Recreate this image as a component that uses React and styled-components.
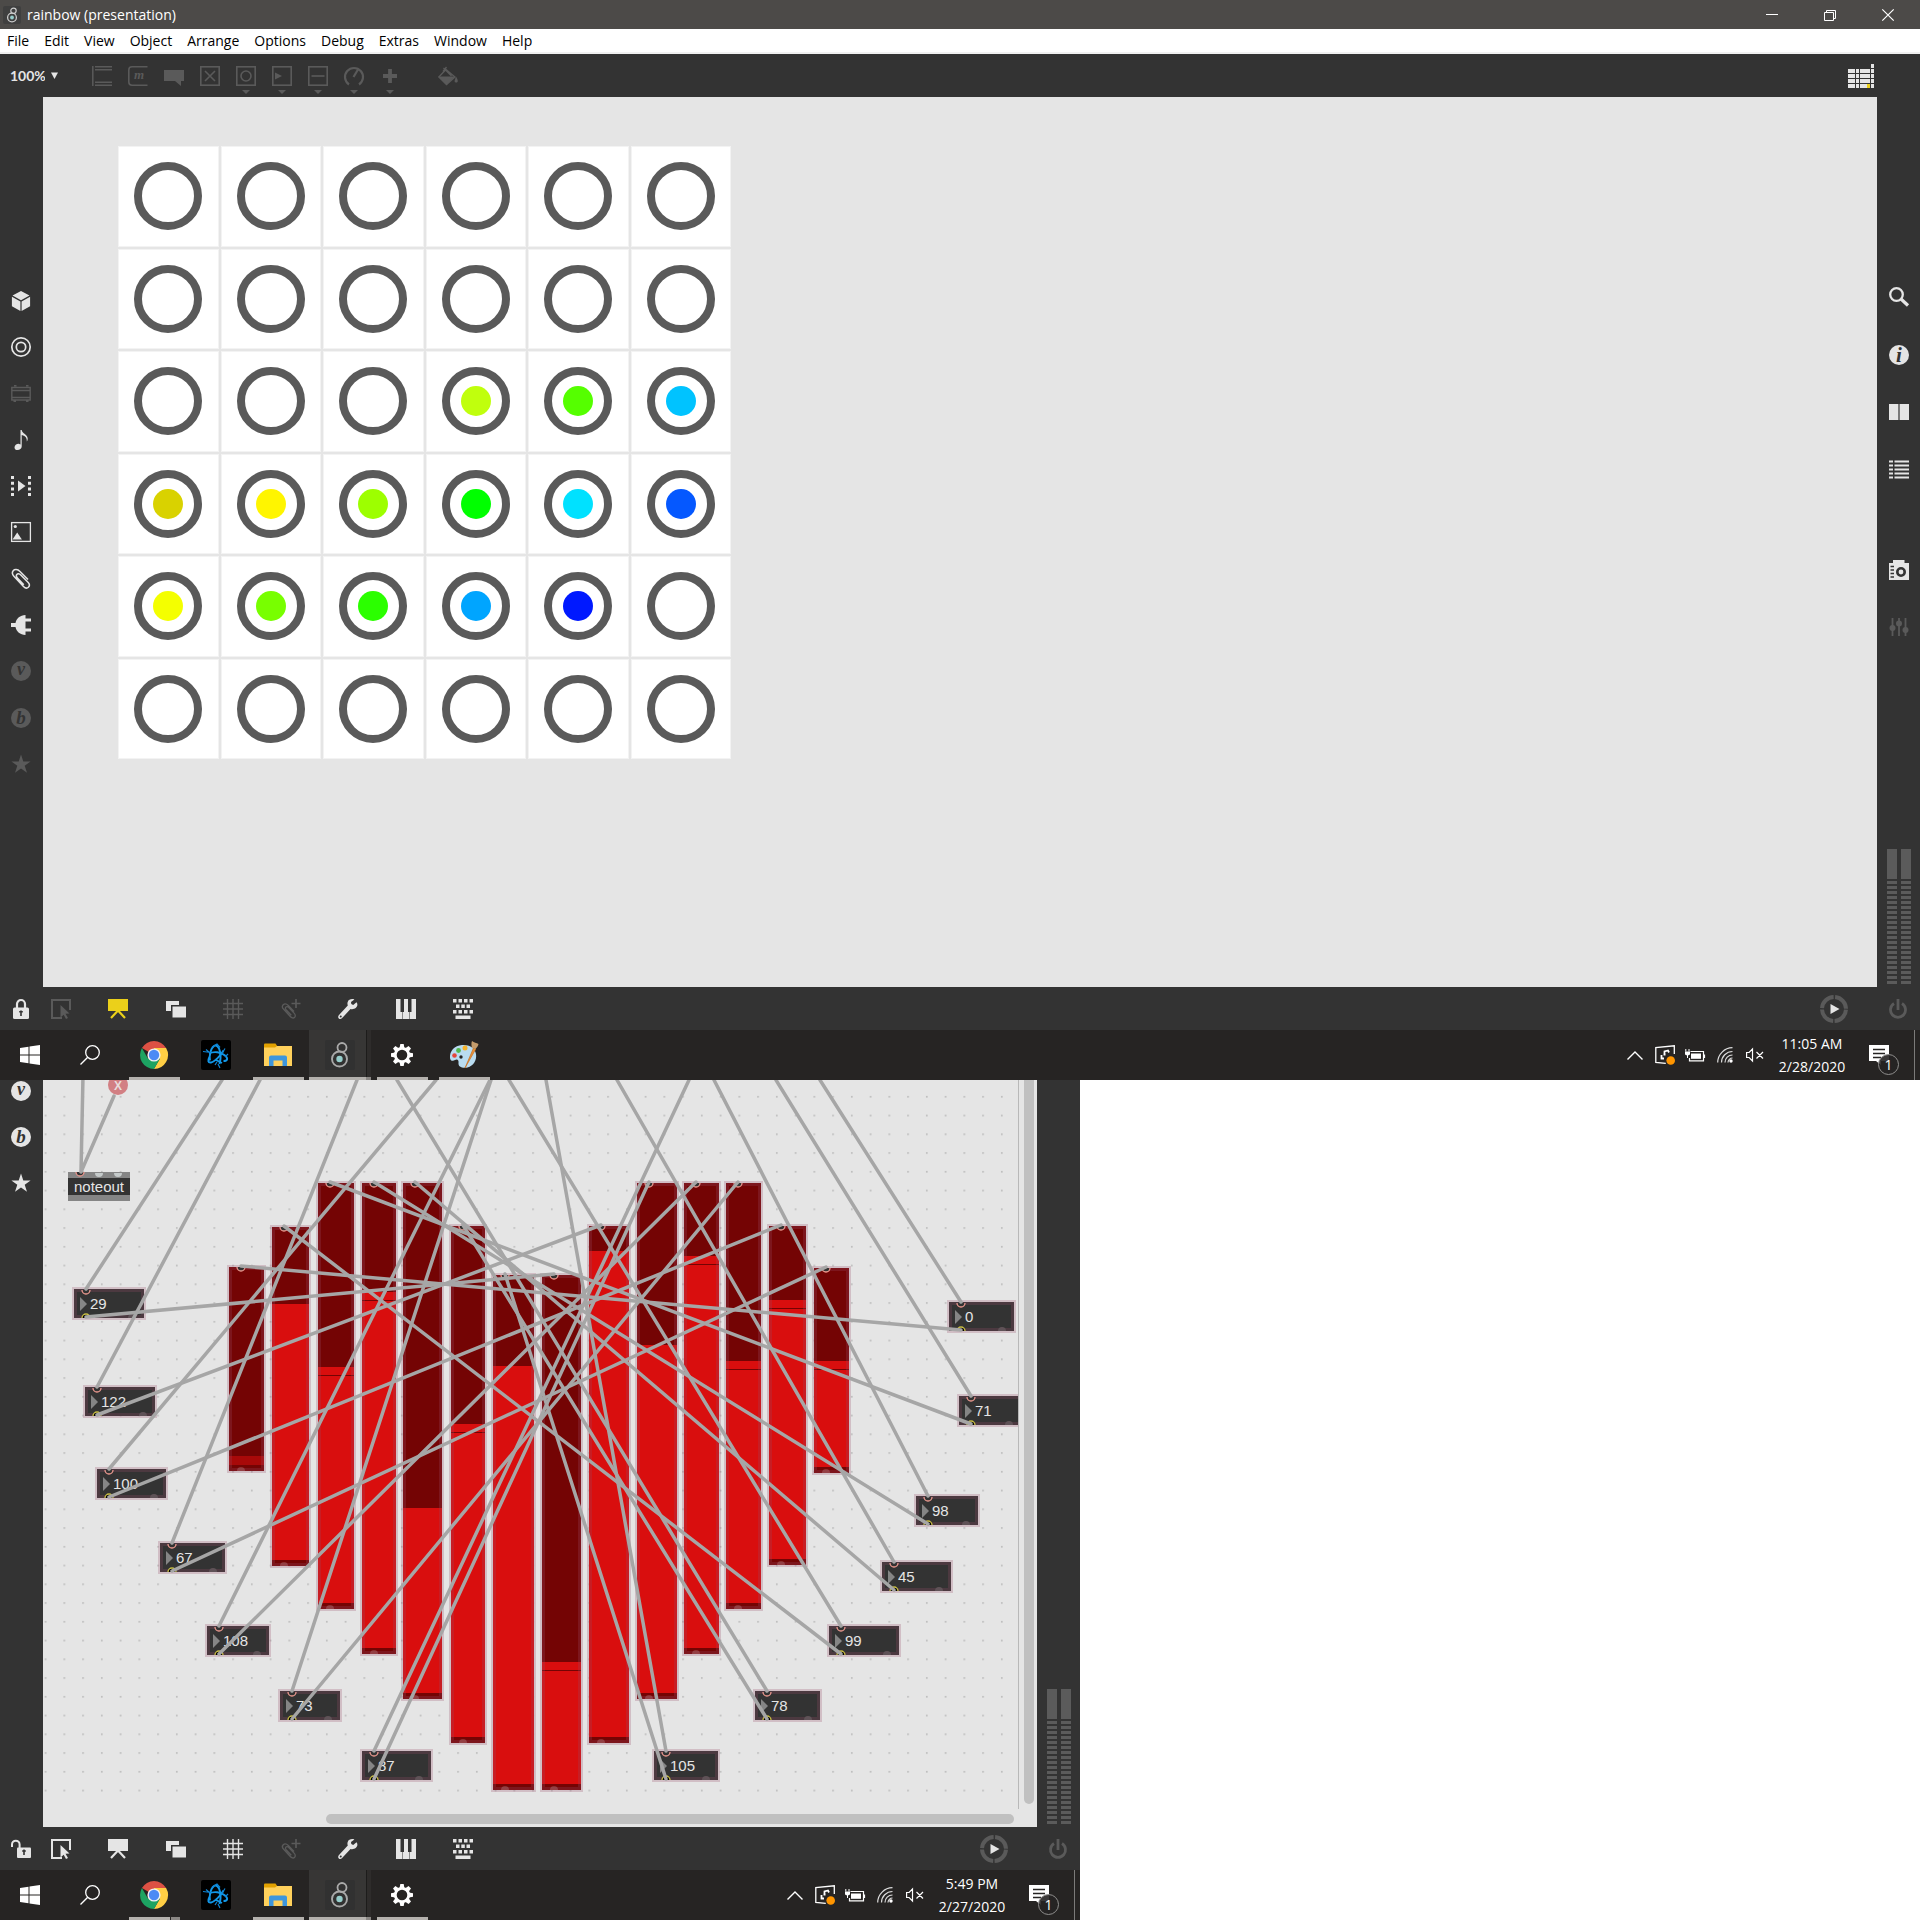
import React from "react";
import styled, { createGlobalStyle, css } from "styled-components";

const LIGHT = "#e5e5e5";
const DIM = "#5a5a5a";
const YELLOW = "#ebd01a";
const BAR = "#333333";

const GlobalStyle = createGlobalStyle`
  *, *::before, *::after { box-sizing: border-box; }
  body { margin: 0; background: #fff; font-family: "Open Sans", "Noto Sans", sans-serif; font-size: 14px; }
  button, select, input { font: inherit; color: inherit; margin: 0; padding: 0; border: 0; background: none; border-radius: 0; }
  svg { display: block; overflow: visible; }
`;

/* ---------- icons ---------- */

const Glyph = ({ w = 20, h = 20, vw = w, vh = h, children }) => (
  <svg width={w} height={h} viewBox={`0 0 ${vw} ${vh}`} fill="none" aria-hidden="true">
    {children}
  </svg>
);

const F = "currentColor";

const Letter = ({ x, y, size, fill = BAR, children }) => (
  <text x={x} y={y} fontFamily="Liberation Serif, serif" fontStyle="italic" fontWeight="700" fontSize={size} textAnchor="middle" fill={fill}>
    {children}
  </text>
);

const icons = {
  object: <Glyph><path d="M.8 0v20M3 .8h17M3 3.8h17M3 16.2h17M3 19.2h17" stroke={F} strokeWidth="1.5" /></Glyph>,
  message: (
    <Glyph>
      <path d="M19.500 .8H4Q.8 .8 .8 4v12q0 3.200 3.200 3.200h15.500" stroke={F} strokeWidth="1.600" />
      <Letter x="11" y="13" size="13" fill={F}>m</Letter>
    </Glyph>
  ),
  comment: <Glyph><path d="M0 4h20v11h-3v5l-6-5H0z" fill={F} /></Glyph>,
  toggle: <Glyph><rect x=".8" y=".8" width="18.400" height="18.400" stroke={F} strokeWidth="1.600" /><path d="M5 5l10 10M15 5L5 15" stroke={F} strokeWidth="1.600" /></Glyph>,
  bang: <Glyph><rect x=".8" y=".8" width="18.400" height="18.400" stroke={F} strokeWidth="1.600" /><circle cx="10" cy="10" r="5" stroke={F} strokeWidth="1.600" /></Glyph>,
  number: <Glyph><rect x=".8" y=".8" width="18.400" height="18.400" stroke={F} strokeWidth="1.600" /><path d="M3 6.500l7 3.500-7 3.500z" fill={F} /></Glyph>,
  slider: <Glyph><rect x=".8" y=".8" width="18.400" height="18.400" stroke={F} strokeWidth="1.600" /><path d="M3.500 10h13" stroke={F} strokeWidth="1.600" /></Glyph>,
  dial: <Glyph><path d="M5 18.500A9 9 0 1 1 15 18.500M9.500 11L14 3.500" stroke={F} strokeWidth="2.200" /></Glyph>,
  plus: <Glyph><path d="M10 3v14M3 10h14" stroke={F} strokeWidth="3.800" /></Glyph>,
  bucket: (
    <Glyph>
      <path d="M5.500 2l8 8M8.500 1L5 5.500M8 3.500L17 11 8.500 18.500.8 11z" stroke={F} strokeWidth="1.300" />
      <path d="M.5 10.500h16.500l-8.500 8.500zM18 10.500q3 5 1 6-2.500.5-2.500-1.500z" fill={F} />
    </Glyph>
  ),
  patcher: (
    <Glyph w={26} h={24}>
      {[5, 10, 15, 20].map((y) => (
        <path key={y} d={`M0 ${y}h7v4H0zM8 ${y}h3v4H8zM12 ${y}h10v4H12zM23 ${y}h3v4h-3z`} fill={F} />
      ))}
      <path d="M23 0h3v4h-3z" fill={F} />
      <path d="M19 20h3v4h-3z" fill={YELLOW} />
    </Glyph>
  ),
  cube: <Glyph><path d="M10 0l8.500 4.500L10 9.200 1.500 4.500zM.9 5.800l8.500 4.700V20L.9 15.200zM19.100 5.800l-8.500 4.700V20l8.500-4.800z" fill={F} /></Glyph>,
  rings: <Glyph><circle cx="10" cy="10" r="9.200" stroke={F} strokeWidth="1.700" /><circle cx="10" cy="10" r="4.700" stroke={F} strokeWidth="1.700" /></Glyph>,
  rack: <Glyph><path d="M.8 3.500h18.400v12.500H.8zM1 6.500h18M1 13.500h18M3 1.800h2.500M15 1.800h2.500M2.500 17.200h2.500M15 17.200h2.500" stroke={F} strokeWidth="1.400" /></Glyph>,
  note: <Glyph><path d="M9.500 0h1.200c.3 3.500 6 4.500 6 8.500 0 1.500-.4 2.500-.9 3 .3-2.800-.8-5.500-5.100-6.500V16.500c0 2-2 3.500-4.200 3.500-1.700 0-3-1-3-2.600 0-2.200 2.500-3.900 4.700-3.500.5.100 1 .3 1.300.6z" fill={F} /></Glyph>,
  film: (
    <Glyph>
      {[0, 5.700, 11.400, 17].map((y) => <path key={y} d={`M0 ${y}h3v3H0zM17 ${y}h3v3h-3z`} fill={F} />)}
      <path d="M7 4.500l7.500 5.500L7 15.500z" fill={F} />
    </Glyph>
  ),
  picture: <Glyph><rect x=".6" y=".6" width="18.800" height="18.800" stroke={F} strokeWidth="1.300" /><circle cx="4.300" cy="4.500" r="1.600" fill={F} /><path d="M1.500 17.500l4.700-7 4.700 7z" fill={F} /></Glyph>,
  clip: <Glyph><path d="M17 10.500L9 2.500C6.500 0 3.500.2 2.200 1.800 1 3.300 1.300 5.500 2.900 7.200l9.600 10.300c1.600 1.700 3.600 2 4.900.8 1.300-1.200 1.200-3.100-.2-4.700L9.800 6C8.300 4.500 6.700 4.400 5.800 5.400c-.8 1-.5 2.400.6 3.600l6.400 6.800" stroke={F} strokeWidth="1.500" /></Glyph>,
  plug: <Glyph><path d="M0 8h4.500C5.500 3 9 .5 14.500 0v3.500H20v3h-5.500v7H20v3h-5.500V20C9 19.500 5.500 17 4.500 12H0z" fill={F} /></Glyph>,
  v: <Glyph><circle cx="10" cy="10" r="10" fill={F} /><Letter x="10" y="14" size="18">v</Letter></Glyph>,
  b: <Glyph><circle cx="10" cy="10" r="10" fill={F} /><Letter x="10" y="16" size="19">b</Letter></Glyph>,
  star: <Glyph><path d="M10 .5l2.300 6.900h7.300l-5.900 4.300 2.300 7L10 14.400l-6 4.300 2.300-7L.4 7.400h7.300z" fill={F} /></Glyph>,
  search: <Glyph><circle cx="7.500" cy="7.500" r="6.300" stroke={F} strokeWidth="2.300" /><path d="M12 12l7 6.500" stroke={F} strokeWidth="3.200" /></Glyph>,
  info: <Glyph><circle cx="10" cy="10" r="10" fill={F} /><Letter x="10" y="16.500" size="21">i</Letter></Glyph>,
  book: <Glyph><path d="M0 2h9.400v16H0zM10.600 2H20v16h-9.400z" fill={F} /></Glyph>,
  list: <Glyph><path d="M0 1.500h4M5.500 1.500H20M0 5.500h4M5.500 5.500H20M0 9.500h4M5.500 9.500H20M0 13.500h4M5.500 13.500H20M0 17.500h4M5.500 17.500H20" stroke={F} strokeWidth="1.900" /></Glyph>,
  camera: (
    <Glyph>
      <path d="M4 0h11.500v3H20v17H0V3h4z" fill={F} />
      <circle cx="12" cy="12" r="3.700" stroke={BAR} strokeWidth="2.600" />
      <path d="M1.500 6.500H5M1.500 10H5M1.500 13.500H5M1.500 17H5" stroke={BAR} strokeWidth="1.500" />
    </Glyph>
  ),
  mixer: <Glyph><path d="M3.500 1v18M10 1v18M16.500 1v18" stroke={F} strokeWidth="1.800" /><circle cx="3.500" cy="11" r="3" fill={F} /><circle cx="10" cy="6.500" r="3" fill={F} /><circle cx="16.500" cy="13" r="3" fill={F} /></Glyph>,
  lock: <Glyph w={16}><path d="M4 9V5a4 4 0 0 1 8 0v4" stroke={F} strokeWidth="2.200" /><rect y="8.500" width="16" height="11.500" rx="1.500" fill={F} /><path d="M8 11.500v5.500M6.200 12.800h3.600" stroke={BAR} strokeWidth="1.600" /></Glyph>,
  unlock: <Glyph><path d="M1 8V5.500a3.800 3.800 0 0 1 7.600 0V9" stroke={F} strokeWidth="2" /><rect x="6" y="8.500" width="14" height="10.500" rx="1" fill={F} /><path d="M13 10.500v5.500M11.200 12h3.600" stroke={BAR} strokeWidth="1.600" /></Glyph>,
  select: <Glyph><path d="M11 19H1V1h18v10" stroke={F} strokeWidth="2" /><path d="M9.500 6l9 8.500-4 .3 2.500 4.200-2 1-2.300-4.200-3.200 2.700z" fill={F} /></Glyph>,
  easel: <Glyph><path d="M0 0h20v12H0z" fill={F} /><path d="M10 11.500l-7 7.500M10 11.500l7 7.500" stroke={F} strokeWidth="2.200" /></Glyph>,
  windows: <Glyph><path d="M0 2h13v4H5v6H0z" fill={F} /><path d="M6.500 7.500H20v11H6.500z" fill={F} /></Glyph>,
  grid: <Glyph><path d="M4.500 0v20M10 0v20M15.500 0v20M0 4.500h20M0 10h20M0 15.500h20" stroke={F} strokeWidth="1.400" /></Glyph>,
  clipPlus: <Glyph><path d="M15 0v9M10.500 4.500h9" stroke={F} strokeWidth="1.700" /><path d="M13 12.500L7.300 6.500C5.500 4.700 3.500 4.500 2.200 5.700 1 7 1.300 8.800 2.500 10l6.800 7.500c1.300 1.500 3 2 4.200.9 1.200-1 .9-2.700-.2-4L7.800 8.500c-1-1-2.300-1.200-3-.3-.7.800-.4 1.800.3 2.600l5.200 5.500" stroke={F} strokeWidth="1.300" /></Glyph>,
  wrench: <Glyph><path d="M18.500 3.300l-3.300 2.600-1.900-.9-.3-2L16.400.6C14 -.5 10.600.3 9.700 3c-.5 1.300-.2 2.600.1 3.500L1 16c-1.200 1.300-1 2.700-.2 3.400.9.900 2.300.8 3.300-.3L12.500 10c3.200 1 6.700-1.200 6.900-4.200 0-1-.4-1.900-.9-2.500zM2.700 18.500a1 1 0 1 1 .1-2 1 1 0 0 1-.1 2z" fill={F} fillRule="evenodd" /></Glyph>,
  piano: <Glyph><path d="M0 0h4.500v13h1.800v7H0zM8 0h4v13h1.300v7H6.800v-7H8zM15.500 0H20v20h-6.200v-7h1.700z" fill={F} /></Glyph>,
  keyboard: (
    <Glyph>
      <path d="M0 0h3.500v3.500H0zM5.500 0H9v3.500H5.500zM11 0h3.500v3.500H11zM16.500 0H20v3.500h-3.500zM3 5.500h3.500V9H3zM8.300 5.500h3.500V9H8.300zM13.500 5.500H17V9h-3.500zM0 11h3.500v3.500H0zM5.500 11H9v3.500H5.500zM11 11h3.500v3.500H11zM16.500 11H20v3.500h-3.500zM2.500 16.500h15V20h-15z" fill={F} />
    </Glyph>
  ),
  play: <Glyph w={28} h={28}><circle cx="14" cy="14" r="12" stroke={DIM} strokeWidth="4" strokeDasharray="17.350 1.500" strokeDashoffset="-.75" /><path d="M10.500 9l9 5-9 5z" fill={LIGHT} /></Glyph>,
  power: <Glyph w={18} h={20}><path d="M9 0v11M5 4.500a7.500 7.500 0 1 0 8 0" stroke={F} strokeWidth="2.800" /></Glyph>,
  minimize: <Glyph w={12} h={12}><path d="M0 5.500h12" stroke="#fff" /></Glyph>,
  restore: <Glyph w={12} h={12}><path d="M.5 3.500h9v8h-9zM2.500 3.500v-2h9v8h-2" stroke="#fff" /></Glyph>,
  close: <Glyph w={12} h={12}><path d="M.3.300l11.400 11.400M11.700.3L.3 11.700" stroke="#fff" strokeWidth="1.200" /></Glyph>,
  start: <Glyph><path d="M0 3l8.500-1.200V9.500H0zM9.500 1.600L20 0v9.500H9.500zM0 10.500h8.500v7.700L0 17zM9.500 10.500H20V20L9.500 18.400z" fill="#fff" /></Glyph>,
  find: <Glyph><circle cx="12.500" cy="7.500" r="6.800" stroke="#fff" strokeWidth="1.300" /><path d="M7.700 12.300L.5 19.500" stroke="#fff" strokeWidth="1.300" /></Glyph>,
  chrome: (
    <Glyph w={28} h={28}>
      <path d="M14 14L1.900 7A14 14 0 0 1 26.100 7z" fill="#dd5144" />
      <path d="M14 14V7h12.100A14 14 0 0 1 13.900 28L20 17.500z" fill="#ffce44" />
      <path d="M14 14l-6.100 3.500L1.900 7A14 14 0 0 0 14 28l6-10.500z" fill="#1da362" />
      <circle cx="14" cy="14" r="6.600" fill="#f1f1f1" />
      <circle cx="14" cy="14" r="5.200" fill="#4c8bf5" />
    </Glyph>
  ),
  battle: (
    <Glyph w={30} h={30}>
      <rect width="30" height="30" rx="2" fill="#000" />
      <g stroke="#1297e8" strokeWidth="1.900">
        <path d="M9 20.500C8 16 9.500 8.500 13 6c2.500-1.500 5 1 6 5.500 1 5 .5 9.500-.5 12.500" />
        <path d="M8 13.500c5-2.500 12-1.500 16 2 3.500 3 2.500 5.500-1.500 5.500" />
        <path d="M22.500 10.500C20 15 14 21.500 10 22.500c-3 .5-3.500-2-1.500-5.500M14 19.500l7 3.500" />
      </g>
      <g stroke="#0f83d2" strokeWidth="1.200"><path d="M2 11.500l8 1M5 9.500l4 3.500M17 24l2 4M16 22l-2 3M24 8.500l-3 5M11 7l5-3 3 3.500M27 14l-3 3" /></g>
    </Glyph>
  ),
  folder: (
    <Glyph w={28} h={24}>
      <path d="M0 1.500Q0 .5 1 .5h10.500l2 3V6H0z" fill="#e2a100" />
      <path d="M0 4.500h11l2-1.500h15v20H0z" fill="#ffd15c" />
      <path d="M5 23V14.500q0-2 2-2h14q2 0 2 2V23h-4.500v-5.500h-9V23z" fill="#3e96dc" />
    </Glyph>
  ),
  max: (
    <Glyph w={30} h={30}>
      <rect width="30" height="30" rx="2" fill="#313131" />
      <circle cx="17" cy="7.500" r="4.500" stroke="#a9a9a9" strokeWidth="1.800" />
      <circle cx="14.500" cy="19" r="7.500" stroke="#a9a9a9" strokeWidth="1.900" />
      <circle cx="14.500" cy="19" r="3.200" fill="#96cdcb" />
    </Glyph>
  ),
  gear: (
    <Glyph w={22} h={22}>
      <circle cx="11" cy="11" r="6.700" stroke="#fff" strokeWidth="2.800" />
      {[0, 45, 90, 135, 180, 225, 270, 315].map((a) => (
        <path key={a} d="M9.300 0h3.400l.7 4h-4.800z" fill="#fff" transform={`rotate(${a} 11 11)`} />
      ))}
    </Glyph>
  ),
  paint: (
    <Glyph w={30} h={28}>
      <path d="M13 4C5.500 4.500.5 10 1 17c.3 3 3 3.500 5 2 2.500-1.500 4 .5 3.500 3-.5 4 4 5.500 9 4.500 6-1.500 9.500-7.500 8.500-13.500C26 6.500 20 3.500 13 4z" fill="#b9dcf0" />
      <circle cx="12" cy="16" r="1.700" fill="#262423" />
      <circle cx="5.500" cy="14.500" r="2.300" fill="#e5453a" />
      <circle cx="9.500" cy="9.500" r="2.400" fill="#52b84c" />
      <circle cx="16" cy="7" r="2.500" fill="#f6b32c" />
      <path d="M16 27l8.500-20 2.300 1z" fill="#e8913a" stroke="#c96f1d" strokeWidth=".7" />
      <path d="M23 7c-.5-2.500-1-4.500 0-7 2 1.500 4.500 2 6.500 3-.5 2-1.500 3.500-3 5z" fill="#c39b6b" />
    </Glyph>
  ),
  chevron: <Glyph w={16} h={9}><path d="M.5 8.500L8 1l7.500 7.500" stroke="#fff" strokeWidth="1.400" /></Glyph>,
  input: (
    <Glyph>
      <path d="M19.300 9V.8L.8 2.500v15l10 .8" stroke="#fff" strokeWidth="1.300" />
      <path d="M9.500 8.500V6.500L13 5.500l1 2M6.500 10v3.500H9M8.500 9.500h2" stroke="#fff" strokeWidth="1.800" />
      <circle cx="15.700" cy="15.500" r="4.300" fill="#ff9500" />
    </Glyph>
  ),
  battery: <Glyph h={13}><path d="M5.500 2.500h13v9.300h-14V9M19.500 5.500v3.500" stroke="#fff" strokeWidth="1.200" /><path d="M6 4.500h10v5.300H6z" fill="#fff" /><path d="M.8 0v2.500M4 0v2.500" stroke="#fff" /><path d="M0 2.500h5v3L3 6.500V9H2V6.500L0 5.500z" fill="#fff" /></Glyph>,
  wifi: <Glyph w={16} h={16}><g stroke="#ddd" strokeWidth="1.200"><path d="M.7 15.500A15 15 0 0 1 15.500.7M4.500 15.500a11 11 0 0 1 11-11M8 15.500a7.500 7.500 0 0 1 7.500-7.500M11 15.500a4.500 4.500 0 0 1 4.500-4.500" /></g><circle cx="14" cy="14" r="1.700" fill="#fff" /></Glyph>,
  mute: <Glyph w={18} h={14}><path d="M.6 4.500h2.500L6.500 1v12L3.100 9.500H.6zM10.500 4l6.500 6.500M17 4l-6.500 6.500" stroke="#fff" strokeWidth="1.200" /></Glyph>,
  notice: <Glyph><path d="M0 0h20v16h-8v4l-5-4H0z" fill="#fff" /><path d="M4 4.500h12M4 8.500h12M4 12.500h8" stroke="#262423" strokeWidth="1.300" /></Glyph>,
  caret: <Glyph w={7} h={7}><path d="M0 .5h7L3.500 7z" fill={F} /></Glyph>,
  drop: <Glyph w={8} h={4}><path d="M0 0h8L4 4z" fill={F} /></Glyph>,
};

/* ---------- window chrome ---------- */

const Page = styled.main`
  display: flex;
  flex-direction: column;
`;

const Shot = styled.section`
  display: flex;
  flex-direction: column;
  width: ${(p) => p.$width};
  background: ${BAR};
`;

const TitleBar = styled.header`
  display: flex;
  align-items: center;
  height: 29px;
  padding: 0 3px;
  background: #4c4a48;
  color: #fff;
  line-height: 20px;
`;

const AppBadge = styled.span`
  display: grid;
  place-items: center;
  width: 18px;
  height: 18px;
  margin-right: 6px;
  border-radius: 2px;
  background: #3f3f3f;
`;

const WindowControls = styled.div`
  display: flex;
  margin-left: auto;
`;

const WindowButton = styled.button`
  display: grid;
  place-items: center;
  width: 58px;
  height: 28px;
`;

const MenuBar = styled.nav`
  display: flex;
  gap: 15px;
  height: 25px;
  padding-left: 7px;
  background: #fff;
  border-bottom: 2px solid #f0f0f0;
  color: #000;
`;

const MenuItem = styled.button`
  line-height: 23px;
`;

const ToolRow = styled.div`
  display: flex;
  align-items: center;
  height: 43px;
  padding: 0 46px 0 10px;
  color: ${DIM};
`;

const Zoom = styled.label`
  display: flex;
  align-items: center;
  gap: 6px;
  width: 74px;
  color: ${LIGHT};
`;

const ZoomSelect = styled.select`
  appearance: none;
  width: 35px;
  font-family: Lato, sans-serif;
  font-size: 14px;
  font-weight: 700;
`;

const Tool = styled.button`
  display: grid;
  place-items: center;
  position: relative;
  width: 36px;
  height: 43px;
  margin-left: ${(p) => (p.$apart ? "22px" : "0")};
`;

const DropMark = styled.span`
  position: absolute;
  left: 14px;
  top: 36px;
`;

const PatcherButton = styled.button`
  margin-left: auto;
  color: ${LIGHT};
`;

const Middle = styled.div`
  display: grid;
  grid-template-columns: 43px 1fr 43px;
  height: ${(p) => p.$height};
`;

const Rail = styled.aside`
  display: flex;
  flex-direction: column;
  align-items: center;
  padding: ${(p) => p.$pad};
`;

const RailGroup = styled.div`
  display: flex;
  flex-direction: column;
  justify-content: space-between;
  height: ${(p) => p.$height};
  margin-bottom: ${(p) => (p.$apart ? "80px" : "0")};
`;

const IconButton = styled.button`
  display: grid;
  place-items: center;
  min-width: 20px;
  height: 20px;
  color: ${(p) => p.$tone || LIGHT};
`;

const Meters = styled.div`
  display: flex;
  gap: 4px;
  margin-top: auto;
`;

const Meter = styled.div`
  width: 10px;
  height: 135px;
  background:
    linear-gradient(#5b5b5b, #5b5b5b) 0 0 / 100% 30px no-repeat,
    repeating-linear-gradient(#5b5b5b 0 3px, transparent 3px 5px) 0 32px / 100% 103px no-repeat;
`;

const LevelMeters = () => (
  <Meters role="img" aria-label="Audio level">
    <Meter />
    <Meter />
  </Meters>
);

const BottomRow = styled.div`
  display: flex;
  align-items: center;
  height: 43px;
`;

const EndCell = styled.div`
  display: flex;
  justify-content: center;
  width: 43px;
  padding-right: 1px;
`;

const BottomTools = styled.div`
  display: flex;
  justify-content: space-between;
  width: 422px;
  margin-left: 8px;
`;

const Transport = styled.button`
  margin: 0 29px 0 auto;
`;

/* ---------- taskbar ---------- */

const TaskRow = styled.footer`
  display: flex;
  height: 50px;
  background: #262423;
  color: #fff;
`;

const TaskLead = styled.button`
  display: grid;
  place-items: center;
  width: 60px;
`;

const TaskApps = styled.div`
  display: flex;
  margin-left: 3px;
`;

const stacked = "linear-gradient(90deg, #b4b1ad 80%, #262423 80% 82%, #8a8784 82%)";

const TaskApp = styled.button`
  display: grid;
  place-items: center;
  position: relative;
  width: 62px;
  ${(p) => p.$active && css`
    background: linear-gradient(90deg, #373635 57px, #1d1c1b 57px 58px, #2e2c2b 58px);
  `}
  ${(p) => p.$running && css`
    &::after {
      content: "";
      position: absolute;
      inset: auto ${p.$active ? "0" : "5px"} 0 ${p.$active ? "0" : "6px"};
      height: 3px;
      background: ${p.$active ? "linear-gradient(90deg, #b4b1ad 57px, #8a8784 57px)" : p.$stacked ? stacked : "#b4b1ad"};
    }
  `}
`;

const Tray = styled.div`
  display: flex;
  margin-left: auto;
`;

const TrayButton = styled.button`
  display: grid;
  place-items: center;
  width: 30px;
`;

const Clock = styled.time`
  width: 84px;
  padding-top: 2px;
  line-height: 23px;
  text-align: center;
`;

const NoticeButton = styled.button`
  display: grid;
  place-items: center;
  position: relative;
  width: 50px;
  margin-right: 10px;
`;

const NoticeCount = styled.span`
  position: absolute;
  left: 24px;
  top: 24px;
  width: 21px;
  height: 21px;
  border: 1px solid #8f8e8d;
  border-radius: 50%;
  background: rgba(38, 36, 35, 0.9);
  line-height: 19px;
`;

const ShowDesktop = styled.button`
  width: 6px;
  border-left: 1px solid #7b7a79;
`;

const apps = [
  { id: "chrome", label: "Chrome", running: true },
  { id: "battle", label: "Battle.net" },
  { id: "folder", label: "File Explorer", running: true },
  { id: "max", label: "Max", running: true, active: true },
  { id: "gear", label: "Settings", running: true },
  { id: "paint", label: "Paint", running: true },
];

const Taskbar = ({ time, date, open, chromeStacked }) => (
  <TaskRow>
    <TaskLead aria-label="Start">{icons.start}</TaskLead>
    <TaskLead aria-label="Search">{icons.find}</TaskLead>
    <TaskApps>
      {apps.slice(0, open).map((a) => (
        <TaskApp key={a.id} aria-label={a.label} $running={a.running} $active={a.active} $stacked={a.id === "chrome" && chromeStacked}>
          {icons[a.id]}
        </TaskApp>
      ))}
    </TaskApps>
    <Tray>
      {["chevron", "input", "battery", "wifi", "mute"].map((n) => (
        <TrayButton key={n} aria-label={n}>{icons[n]}</TrayButton>
      ))}
      <Clock>{time}<br />{date}</Clock>
      <NoticeButton aria-label="Notifications">
        {icons.notice}
        <NoticeCount>1</NoticeCount>
      </NoticeButton>
      <ShowDesktop aria-label="Show desktop" />
    </Tray>
  </TaskRow>
);

const BottomBar = ({ locked }) => {
  const tools = [
    ["select", locked ? DIM : LIGHT],
    ["easel", locked ? YELLOW : LIGHT],
    ["windows", LIGHT],
    ["grid", locked ? DIM : LIGHT],
    ["clipPlus", DIM],
    ["wrench", LIGHT],
    ["piano", LIGHT],
    ["keyboard", LIGHT],
  ];
  return (
    <BottomRow>
      <EndCell>
        <IconButton aria-label={locked ? "Unlock" : "Lock"}>{locked ? icons.lock : icons.unlock}</IconButton>
      </EndCell>
      <BottomTools>
        {tools.map(([n, tone]) => <IconButton key={n} aria-label={n} $tone={tone}>{icons[n]}</IconButton>)}
      </BottomTools>
      <Transport aria-label="Play">{icons.play}</Transport>
      <EndCell><IconButton aria-label="Audio power" $tone={DIM}>{icons.power}</IconButton></EndCell>
    </BottomRow>
  );
};

/* ---------- presentation window ---------- */

const Presentation = styled.div`
  padding: 49px 75px;
  background: #e5e5e5;
`;

const BangGrid = styled.div`
  display: grid;
  grid-template-columns: repeat(6, 1fr);
  gap: 2px;
  width: 613px;
`;

const Bang = styled.button`
  display: grid;
  place-items: center;
  aspect-ratio: 1;
  background: #fff;
  border: 1px solid #f3f3f3;
`;

const Ring = styled.span`
  display: grid;
  place-items: center;
  width: 68px;
  height: 68px;
  border: 8px solid #5a5a5a;
  border-radius: 50%;
  &::after {
    content: "";
    width: 30px;
    height: 30px;
    border-radius: 50%;
    background: ${(p) => p.$color || "transparent"};
  }
`;

const O = null;
const bangs = [
  O, O, O, O, O, O,
  O, O, O, O, O, O,
  O, O, O, "#c0ff0d", "#55ff00", "#00c3ff",
  "#d9d200", "#fff500", "#9dff00", "#00ff00", "#00e1ff", "#0558ff",
  "#f4ff00", "#78ff00", "#2bff00", "#00a5ff", "#0019ff", O,
  O, O, O, O, O, O,
];

const toolIcons = ["object", "message", "comment", "toggle", "bang", "number", "slider", "dial", "plus"];
const leftIcons = ["cube", "rings", "rack", "note", "film", "picture", "clip", "plug", "v", "b", "star"];
const dimLeft = ["rack", "v", "b", "star"];

const PresentationWindow = () => (
  <Shot $width="100%">
    <TitleBar>
      <AppBadge>
        <Glyph w={12} h={16}>
          <circle cx="7.500" cy="3.800" r="2.700" stroke="#ccc" strokeWidth="1.200" />
          <circle cx="6" cy="10.500" r="4.400" stroke="#ccc" strokeWidth="1.300" />
          <circle cx="6" cy="10.500" r="1.900" fill="#96cdcb" />
        </Glyph>
      </AppBadge>
      rainbow (presentation)
      <WindowControls>
        {["minimize", "restore", "close"].map((n) => <WindowButton key={n} aria-label={n}>{icons[n]}</WindowButton>)}
      </WindowControls>
    </TitleBar>
    <MenuBar>
      {["File", "Edit", "View", "Object", "Arrange", "Options", "Debug", "Extras", "Window", "Help"].map((m) => (
        <MenuItem key={m}>{m}</MenuItem>
      ))}
    </MenuBar>
    <ToolRow>
      <Zoom>
        <ZoomSelect aria-label="Zoom"><option>100%</option></ZoomSelect>
        {icons.caret}
      </Zoom>
      {toolIcons.map((n, i) => (
        <Tool key={n} aria-label={n}>
          {icons[n]}
          {i > 3 && <DropMark>{icons.drop}</DropMark>}
        </Tool>
      ))}
      <Tool aria-label="Format" $apart>{icons.bucket}</Tool>
      <PatcherButton aria-label="Patcher windows">{icons.patcher}</PatcherButton>
    </ToolRow>
    <Middle $height="890px">
      <Rail $pad="194px 1px 0 0">
        <RailGroup $height="483px">
          {leftIcons.map((n) => <IconButton key={n} aria-label={n} $tone={dimLeft.includes(n) ? DIM : LIGHT}>{icons[n]}</IconButton>)}
        </RailGroup>
      </Rail>
      <Presentation>
        <BangGrid>
          {bangs.map((color, i) => <Bang key={i} aria-label={`Pad ${i + 1}`}><Ring $color={color} /></Bang>)}
        </BangGrid>
      </Presentation>
      <Rail $pad="190px 0 3px">
        <RailGroup $height="193px" $apart>
          {["search", "info", "book", "list"].map((n) => <IconButton key={n} aria-label={n}>{icons[n]}</IconButton>)}
        </RailGroup>
        <RailGroup $height="77px">
          <IconButton aria-label="Snapshot">{icons.camera}</IconButton>
          <IconButton aria-label="Mixer" $tone={DIM}>{icons.mixer}</IconButton>
        </RailGroup>
        <LevelMeters />
      </Rail>
    </Middle>
    <BottomBar locked />
    <Taskbar time="11:05 AM" date="2/28/2020" open={6} />
  </Shot>
);

/* ---------- patcher window ---------- */

const Scroller = styled.div`
  display: grid;
  grid-template: 1fr 18px / 1fr 18px;
  background: #e5e5e5;
`;

const Patch = styled.div`
  position: relative;
  overflow: hidden;
  border-right: 1px solid #b8b8b8;
`;

const ThumbV = styled.div`
  width: 10px;
  height: calc(100% - 5px);
  margin-left: 5px;
  border-radius: 0 0 5px 5px;
  background: #c0c0c0;
`;

const ThumbH = styled.div`
  height: 10px;
  margin: 5px 5px 0 283px;
  border-radius: 5px;
  background: #c0c0c0;
`;

const PatchLines = styled.svg`
  position: absolute;
  left: 0;
  top: 0;
  width: 100%;
  height: 100%;
  pointer-events: none;
`;

const node = css`
  position: absolute;
  left: ${(p) => p.$x}px;
  top: ${(p) => p.$y}px;
`;

const selected = css`
  &::after {
    content: "";
    position: absolute;
    inset: -2px;
    border: 5px solid rgba(150, 75, 105, 0.25);
    pointer-events: none;
  }
`;

const SliderBox = styled.label`
  ${node}
  ${selected}
  display: flex;
  flex-direction: column;
  width: ${(p) => p.$w}px;
  height: ${(p) => p.$h}px;
  background: #740404;
`;

const SliderLevel = styled.span`
  flex: 1;
  margin-top: ${(p) => p.$top}px;
  background: ${(p) => (p.$low ? "#a80909" : "#d90e0e")};
  ${(p) => p.$notch && css`
    background: linear-gradient(#d90e0e 8px, #740404 8px 9px, #d90e0e 9px);
  `}
`;

const SliderFoot = styled.span`
  height: 6px;
`;

const SliderInput = styled.input`
  position: absolute;
  inset: 0;
  width: 100%;
  height: 100%;
  opacity: 0;
  writing-mode: vertical-lr;
  direction: rtl;
`;

const NumberBox = styled.label`
  ${node}
  ${selected}
  display: flex;
  align-items: center;
  gap: 3px;
  width: ${(p) => p.$w}px;
  height: 29px;
  padding-left: 6px;
  background: #333;
  color: #e5e5e5;
`;

const NumberInput = styled.input`
  width: 36px;
  font-family: "Liberation Sans", Arial, sans-serif;
  font-size: 15px;
  line-height: 20px;
`;

const ObjectBox = styled.button`
  ${node}
  width: 62px;
  height: 29px;
  border: solid #858585;
  border-width: 6px 0;
  background: #333;
  color: #e5e5e5;
  font-family: "Liberation Sans", Arial, sans-serif;
  font-size: 15px;
  line-height: 17px;
`;

const CloseBadge = styled.span`
  ${node}
  width: 20px;
  height: 20px;
  padding-top: 5px;
  border-radius: 50%;
  background: #d27f83;
  color: #e8dcdc;
  font-family: "Liberation Sans", Arial, sans-serif;
  font-size: 12px;
  font-weight: 700;
  line-height: 12px;
  text-align: center;
`;

/* x, y, width, height, level offset, notch */
const sliders = [
  [186, 187, 35, 204, 189, false],
  [229, 147, 37, 339, 77, false],
  [275, 103, 36, 426, 184, true],
  [319, 103, 34, 471, 109, true],
  [360, 103, 39, 516, 325, false],
  [408, 146, 34, 517, 198, true],
  [450, 195, 41, 515, 91, false],
  [499, 195, 39, 515, 387, true],
  [546, 146, 40, 517, 25, false],
  [594, 103, 40, 516, 162, false],
  [641, 103, 35, 471, 73, true],
  [683, 103, 35, 426, 178, true],
  [726, 146, 37, 339, 74, true],
  [771, 188, 35, 205, 93, true],
];

/* value, x, y, width, x where the upper cord enters the view, target slider */
const numbers = [
  [29, 31, 209, 70, 179, 7],
  [122, 42, 307, 70, 217, 8],
  [100, 54, 389, 69, 393, 12],
  [67, 117, 463, 65, 314, 13],
  [108, 164, 546, 62, 447, 10],
  [73, 237, 611, 60, 448, 11],
  [87, 319, 671, 69, 646, 9],
  [105, 611, 671, 64, 503, 6],
  [78, 712, 611, 65, 354, 5],
  [99, 786, 546, 70, 466, 1],
  [45, 839, 482, 69, 574, 4],
  [98, 873, 416, 62, 671, 3],
  [71, 916, 316, 62, 733, 2],
  [0, 906, 222, 65, 777, 0],
];

const PORT = 12;

const Inlet = ({ x, y }) => (
  <path d={`M${x - 4} ${y}a4 4 0 0 0 8 0`} fill="#333" stroke="#ee9a90" strokeWidth="1.300" />
);

const Patching = () => (
  <>
    <PatchLines>
      <defs>
        <pattern id="dots" x="1.700" y="15.900" width="18.750" height="18.750" patternUnits="userSpaceOnUse">
          <rect width="1.700" height="1.700" fill="#bdbdbd" />
        </pattern>
      </defs>
      <rect width="960" height="714" fill="url(#dots)" />
    </PatchLines>
    {sliders.map(([x, y, w, h, level, notch], i) => (
      <SliderBox key={x} $x={x} $y={y} $w={w} $h={h}>
        <SliderLevel $top={level} $notch={notch} $low={i === 0} />
        <SliderFoot />
        <SliderInput type="range" min="0" max={h - 6} defaultValue={h - 6 - level} aria-label={`Slider ${i + 1}`} />
      </SliderBox>
    ))}
    {numbers.map(([value, x, y, w]) => (
      <NumberBox key={value} $x={x} $y={y} $w={w}>
        <Glyph w={7} h={14}><path d="M0 0l7 7-7 7z" fill="#858585" /></Glyph>
        <NumberInput type="text" inputMode="numeric" defaultValue={value} aria-label={`Number ${value}`} />
      </NumberBox>
    ))}
    <ObjectBox $x={25} $y={92}>noteout</ObjectBox>
    <CloseBadge $x={65} $y={-5}>X</CloseBadge>
    <PatchLines>
      {sliders.map(([x, y, , h]) => (
        <g key={x}>
          <Inlet x={x + PORT} y={y} />
          <path d={`M${x + PORT - 4} ${y + h}a4 4 0 0 1 8 0z`} fill="#fff" fillOpacity=".18" />
        </g>
      ))}
      {numbers.map(([value, x, y, w]) => (
        <g key={value}>
          <Inlet x={x + PORT} y={y + 1} />
          <path d={`M${x + PORT - 4} ${y + 29}a4 4 0 0 1 8 0`} stroke="#c9bf45" strokeWidth="1.300" />
          <path d={`M${x + w - PORT - 4} ${y + 29}a4 4 0 0 1 8 0z`} fill="#5f5257" />
        </g>
      ))}
      <Inlet x={37} y={92} />
      <path d="M52 93a4 4 0 0 0 8 0zM71 93a4 4 0 0 0 8 0z" fill="#c5caca" />
      <g stroke="#a6a6a6" strokeWidth="3.500" strokeLinecap="round">
        <path d="M40 -4L38 92M71 16L38 92" />
        {numbers.map(([value, x, y, , from, to]) => (
          <path
            key={value}
            d={`M${from} 0L${x + PORT} ${y}M${x + PORT} ${y + 28}L${sliders[to][0] + PORT} ${sliders[to][1] - 1}`}
          />
        ))}
      </g>
    </PatchLines>
  </>
);

const PatcherWindow = () => (
  <Shot $width="56.25%">
    <Middle $height="747px">
      <Rail $pad="1px 1px 0 0">
        <RailGroup $height="112px">
          {["v", "b", "star"].map((n) => <IconButton key={n} aria-label={n}>{icons[n]}</IconButton>)}
        </RailGroup>
      </Rail>
      <Scroller>
        <Patch><Patching /></Patch>
        <ThumbV />
        <ThumbH />
      </Scroller>
      <Rail $pad="0 0 3px">
        <LevelMeters />
      </Rail>
    </Middle>
    <BottomBar />
    <Taskbar time="5:49 PM" date="2/27/2020" open={5} chromeStacked />
  </Shot>
);

export default function App() {
  return (
    <Page>
      <GlobalStyle />
      <PresentationWindow />
      <PatcherWindow />
    </Page>
  );
}
